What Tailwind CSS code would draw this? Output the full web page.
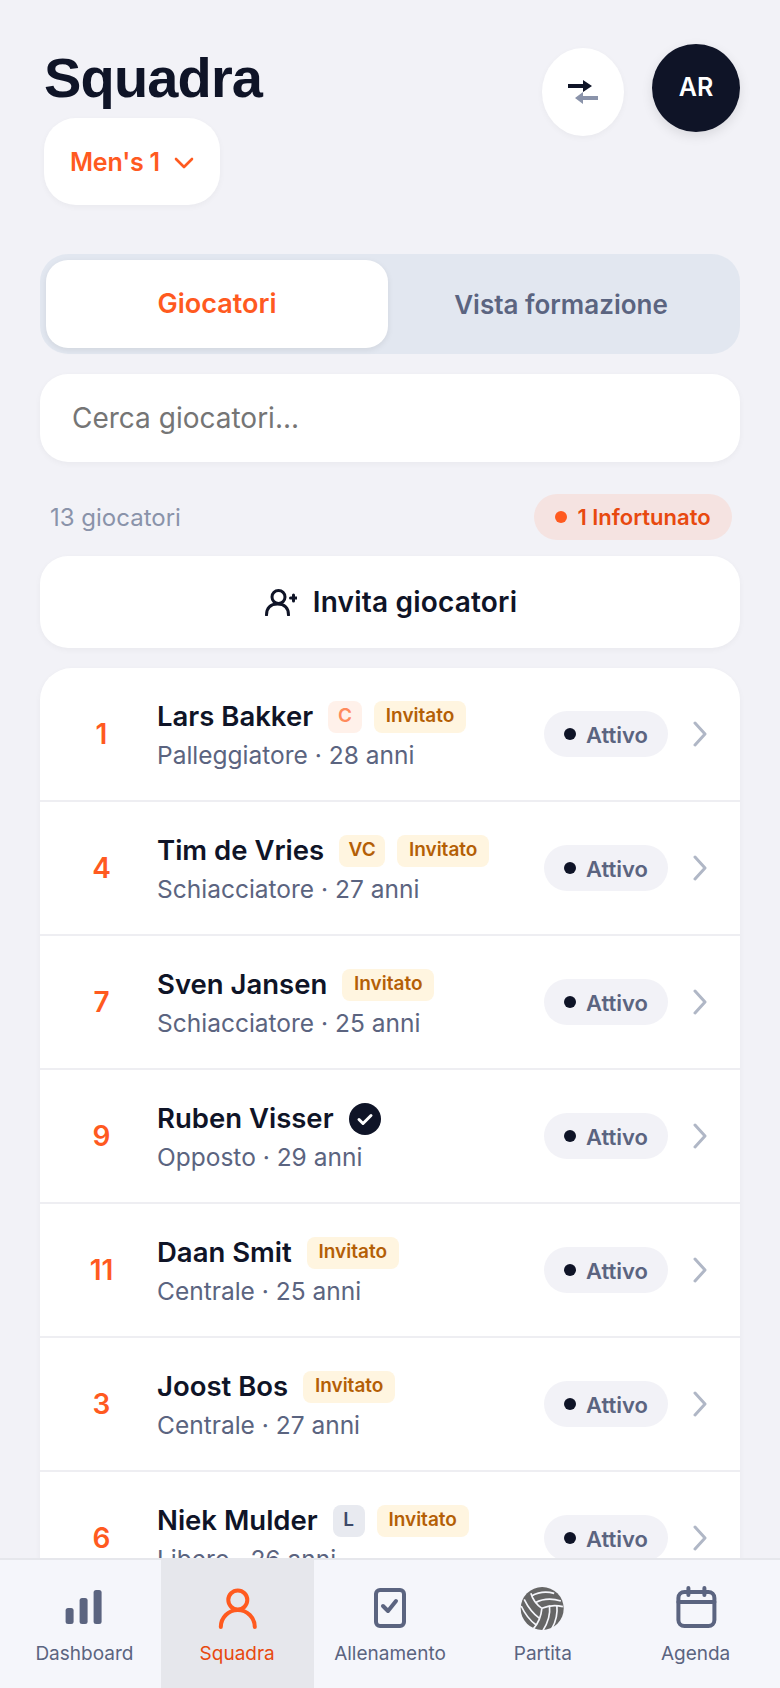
<!DOCTYPE html>
<html lang="en">

<head>
    <meta charset="utf-8">
    <meta name="viewport" content="width=device-width, initial-scale=1">
    <title>Squadra</title>
    <script src="https://cdn.jsdelivr.net/npm/@tailwindcss/browser@4"></script>
</head>

<body class="bg-[#f2f2f7] font-['Inter',sans-serif]">
    <div class="flex flex-col h-[1688px] overflow-hidden">
        <main class="flex-1 min-h-0 overflow-hidden px-10">
            <!-- Header -->
            <header class="flex justify-between items-start pt-11 pl-1">
                <div>
                    <h1 class="font-['Liberation_Sans',sans-serif] font-bold text-[56px] leading-[67px] tracking-[-0.84px] text-[#0f1427]">Squadra</h1>
                    <button class="mt-[7px] w-[176px] h-[87px] pt-[2px] rounded-[32px] bg-white shadow-[0_2px_6px_rgba(0,0,0,0.04)] flex items-center justify-center gap-[14px] text-[#ff5a1f] text-[25px] tracking-[-0.2px] font-semibold">
                        Men's 1
                        <svg class="w-[20px] h-[12px]" viewBox="0 0 20 12" fill="none" stroke="currentColor" stroke-width="2.6" stroke-linecap="round" stroke-linejoin="round"><path d="M2 2l8 8 8-8" /></svg>
                    </button>
                </div>
                <div class="flex items-start gap-7">
                    <button class="mt-1 w-[82px] h-[88px] rounded-[50%] bg-white shadow-[0_2px_6px_rgba(0,0,0,0.04)] flex items-center justify-center">
                        <svg class="w-[30px] h-[24px]" viewBox="0 0 30 24"><path d="M0 4h15V0l9 6-9 6V8H0z" fill="#0f1427" /><path d="M30 16H15v-4l-8 6 8 6v-4h15z" fill="#8a93aa" /></svg>
                    </button>
                    <div class="w-[88px] h-[88px] rounded-full bg-[#0f1427] shadow-[0_4px_12px_rgba(0,0,0,0.1)] text-white text-[25px] font-semibold flex items-center justify-center">AR</div>
                </div>
            </header>

            <!-- Tabs -->
            <div class="mt-[49px] h-[100px] rounded-[28px] bg-[#e2e7f0] p-[6px] flex text-[26px] font-semibold">
                <div class="w-[342px] rounded-[22px] bg-white shadow-[0_2px_6px_rgba(0,0,0,0.08)] text-[27px] text-[#ff5a1f] flex items-center justify-center">Giocatori</div>
                <div class="flex-1 text-[#5b6480] flex items-center justify-center">Vista formazione</div>
            </div>

            <!-- Search -->
            <input type="text" placeholder="Cerca giocatori..." class="mt-5 w-full h-[88px] rounded-[28px] bg-white shadow-[0_2px_6px_rgba(0,0,0,0.04)] px-8 text-[28px] placeholder:text-[#757575] outline-none">

            <!-- Count row -->
            <div class="mt-8 pl-[10px] pr-2 flex items-center justify-between">
                <span class="pt-[2px] text-[24px] text-[#8a93aa]">13 giocatori</span>
                <span class="h-[46px] w-[198px] rounded-full bg-[#f5e3e1] text-[#e8490f] text-[22px] font-semibold flex items-center justify-center gap-[10px]">
                    <span class="w-3 h-3 rounded-full bg-[#ff5a1f]"></span>
                    1 Infortunato
                </span>
            </div>

            <!-- Invite -->
            <button class="mt-[16px] w-full h-[92px] rounded-[28px] bg-white shadow-[0_2px_6px_rgba(0,0,0,0.04)] flex items-center justify-center gap-4 pl-[2px] text-[28px] tracking-[0.2px] font-semibold text-[#0f1427]">
                <svg class="w-8 h-[27px]" viewBox="0 0 32 27" fill="none" stroke="currentColor" stroke-width="3" stroke-linecap="round"><circle cx="13.5" cy="8" r="6.5" /><path d="M1.5 26c0-7 4-11 11-11s11 4 11 11M25.500 9h6M28.500 6v6" /></svg>
                Invita giocatori
            </button>

            <!-- Players -->
            <ul class="mt-5 rounded-t-[32px] bg-white shadow-[0_2px_6px_rgba(0,0,0,0.04)]">
                <li class="h-[134px] border-b-2 border-[#eeeef2] flex items-center">
                    <span class="w-[117px] pl-[6px] text-center text-[#ff5a1f] text-[28px] font-semibold">1</span>
                    <div class="flex-1 min-w-0 pt-[2px]">
                        <div class="flex items-center gap-3 h-[40px]">
                            <span class="text-[27.5px] font-semibold text-[#0f1427] mr-[3px]">Lars Bakker</span>
                            <span class="h-8 w-[34px] rounded-lg bg-[#fff1ea] text-[#ff8a5c] text-[19px] font-semibold flex items-center justify-center">C</span>
                            <span class="h-8 w-[92px] rounded-lg bg-[#fff5e0] text-[#b45f06] text-[19px] font-semibold flex items-center justify-center">Invitato</span>
                        </div>
                        <div class="text-[24.5px] text-[#5b6480]">Palleggiatore · 28 anni</div>
                    </div>
                    <span class="h-[46px] w-[124px] rounded-full bg-[#f2f2f7] text-[#5b6480] text-[22px] font-semibold flex items-center justify-center gap-[10px]"><span class="w-3 h-3 rounded-full bg-[#0f1427]"></span><span class="pt-[2px]">Attivo</span></span>
                    <svg class="mr-8 ml-6 w-[16px] h-[26px]" viewBox="0 0 16 26" fill="none" stroke="#b0b7c6" stroke-width="3" stroke-linecap="round" stroke-linejoin="round"><path d="M3 2l10 11L3 24" /></svg>
                </li>
                <li class="h-[134px] border-b-2 border-[#eeeef2] flex items-center">
                    <span class="w-[117px] pl-[6px] text-center text-[#ff5a1f] text-[28px] font-semibold">4</span>
                    <div class="flex-1 min-w-0 pt-[2px]">
                        <div class="flex items-center gap-3 h-[40px]">
                            <span class="text-[27.5px] font-semibold text-[#0f1427] mr-[3px]">Tim de Vries</span>
                            <span class="h-8 w-[46px] rounded-lg bg-[#fff5e0] text-[#b45f06] text-[19px] font-semibold flex items-center justify-center">VC</span>
                            <span class="h-8 w-[92px] rounded-lg bg-[#fff5e0] text-[#b45f06] text-[19px] font-semibold flex items-center justify-center">Invitato</span>
                        </div>
                        <div class="text-[24.5px] text-[#5b6480]">Schiacciatore · 27 anni</div>
                    </div>
                    <span class="h-[46px] w-[124px] rounded-full bg-[#f2f2f7] text-[#5b6480] text-[22px] font-semibold flex items-center justify-center gap-[10px]"><span class="w-3 h-3 rounded-full bg-[#0f1427]"></span><span class="pt-[2px]">Attivo</span></span>
                    <svg class="mr-8 ml-6 w-[16px] h-[26px]" viewBox="0 0 16 26" fill="none" stroke="#b0b7c6" stroke-width="3" stroke-linecap="round" stroke-linejoin="round"><path d="M3 2l10 11L3 24" /></svg>
                </li>
                <li class="h-[134px] border-b-2 border-[#eeeef2] flex items-center">
                    <span class="w-[117px] pl-[6px] text-center text-[#ff5a1f] text-[28px] font-semibold">7</span>
                    <div class="flex-1 min-w-0 pt-[2px]">
                        <div class="flex items-center gap-3 h-[40px]">
                            <span class="text-[27.5px] font-semibold text-[#0f1427] mr-[3px]">Sven Jansen</span>
                            <span class="h-8 w-[92px] rounded-lg bg-[#fff5e0] text-[#b45f06] text-[19px] font-semibold flex items-center justify-center">Invitato</span>
                        </div>
                        <div class="text-[24.5px] text-[#5b6480]">Schiacciatore · 25 anni</div>
                    </div>
                    <span class="h-[46px] w-[124px] rounded-full bg-[#f2f2f7] text-[#5b6480] text-[22px] font-semibold flex items-center justify-center gap-[10px]"><span class="w-3 h-3 rounded-full bg-[#0f1427]"></span><span class="pt-[2px]">Attivo</span></span>
                    <svg class="mr-8 ml-6 w-[16px] h-[26px]" viewBox="0 0 16 26" fill="none" stroke="#b0b7c6" stroke-width="3" stroke-linecap="round" stroke-linejoin="round"><path d="M3 2l10 11L3 24" /></svg>
                </li>
                <li class="h-[134px] border-b-2 border-[#eeeef2] flex items-center">
                    <span class="w-[117px] pl-[6px] text-center text-[#ff5a1f] text-[28px] font-semibold">9</span>
                    <div class="flex-1 min-w-0 pt-[2px]">
                        <div class="flex items-center gap-3 h-[40px]">
                            <span class="text-[27.5px] font-semibold text-[#0f1427] mr-[3px]">Ruben Visser</span>
                            <svg class="w-8 h-8" viewBox="0 0 32 32"><circle cx="16" cy="16" r="16" fill="#0f1427" /><path d="M10 16.500l4 4 8-8" fill="none" stroke="#fff" stroke-width="3" stroke-linecap="round" stroke-linejoin="round" /></svg>
                        </div>
                        <div class="text-[24.5px] text-[#5b6480]">Opposto · 29 anni</div>
                    </div>
                    <span class="h-[46px] w-[124px] rounded-full bg-[#f2f2f7] text-[#5b6480] text-[22px] font-semibold flex items-center justify-center gap-[10px]"><span class="w-3 h-3 rounded-full bg-[#0f1427]"></span><span class="pt-[2px]">Attivo</span></span>
                    <svg class="mr-8 ml-6 w-[16px] h-[26px]" viewBox="0 0 16 26" fill="none" stroke="#b0b7c6" stroke-width="3" stroke-linecap="round" stroke-linejoin="round"><path d="M3 2l10 11L3 24" /></svg>
                </li>
                <li class="h-[134px] border-b-2 border-[#eeeef2] flex items-center">
                    <span class="w-[117px] pl-[6px] text-center text-[#ff5a1f] text-[28px] font-semibold">11</span>
                    <div class="flex-1 min-w-0 pt-[2px]">
                        <div class="flex items-center gap-3 h-[40px]">
                            <span class="text-[27.5px] font-semibold text-[#0f1427] mr-[3px]">Daan Smit</span>
                            <span class="h-8 w-[92px] rounded-lg bg-[#fff5e0] text-[#b45f06] text-[19px] font-semibold flex items-center justify-center">Invitato</span>
                        </div>
                        <div class="text-[24.5px] text-[#5b6480]">Centrale · 25 anni</div>
                    </div>
                    <span class="h-[46px] w-[124px] rounded-full bg-[#f2f2f7] text-[#5b6480] text-[22px] font-semibold flex items-center justify-center gap-[10px]"><span class="w-3 h-3 rounded-full bg-[#0f1427]"></span><span class="pt-[2px]">Attivo</span></span>
                    <svg class="mr-8 ml-6 w-[16px] h-[26px]" viewBox="0 0 16 26" fill="none" stroke="#b0b7c6" stroke-width="3" stroke-linecap="round" stroke-linejoin="round"><path d="M3 2l10 11L3 24" /></svg>
                </li>
                <li class="h-[134px] border-b-2 border-[#eeeef2] flex items-center">
                    <span class="w-[117px] pl-[6px] text-center text-[#ff5a1f] text-[28px] font-semibold">3</span>
                    <div class="flex-1 min-w-0 pt-[2px]">
                        <div class="flex items-center gap-3 h-[40px]">
                            <span class="text-[27.5px] font-semibold text-[#0f1427] mr-[3px]">Joost Bos</span>
                            <span class="h-8 w-[92px] rounded-lg bg-[#fff5e0] text-[#b45f06] text-[19px] font-semibold flex items-center justify-center">Invitato</span>
                        </div>
                        <div class="text-[24.5px] text-[#5b6480]">Centrale · 27 anni</div>
                    </div>
                    <span class="h-[46px] w-[124px] rounded-full bg-[#f2f2f7] text-[#5b6480] text-[22px] font-semibold flex items-center justify-center gap-[10px]"><span class="w-3 h-3 rounded-full bg-[#0f1427]"></span><span class="pt-[2px]">Attivo</span></span>
                    <svg class="mr-8 ml-6 w-[16px] h-[26px]" viewBox="0 0 16 26" fill="none" stroke="#b0b7c6" stroke-width="3" stroke-linecap="round" stroke-linejoin="round"><path d="M3 2l10 11L3 24" /></svg>
                </li>
                <li class="h-[134px] border-b-2 border-[#eeeef2] flex items-center">
                    <span class="w-[117px] pl-[6px] text-center text-[#ff5a1f] text-[28px] font-semibold">6</span>
                    <div class="flex-1 min-w-0 pt-[2px]">
                        <div class="flex items-center gap-3 h-[40px]">
                            <span class="text-[27.5px] font-semibold text-[#0f1427] mr-[3px]">Niek Mulder</span>
                            <span class="h-8 w-8 rounded-lg bg-[#e8eaf0] text-[#3e4a68] text-[19px] font-semibold flex items-center justify-center">L</span>
                            <span class="h-8 w-[92px] rounded-lg bg-[#fff5e0] text-[#b45f06] text-[19px] font-semibold flex items-center justify-center">Invitato</span>
                        </div>
                        <div class="text-[24.5px] text-[#5b6480]">Libero · 26 anni</div>
                    </div>
                    <span class="h-[46px] w-[124px] rounded-full bg-[#f2f2f7] text-[#5b6480] text-[22px] font-semibold flex items-center justify-center gap-[10px]"><span class="w-3 h-3 rounded-full bg-[#0f1427]"></span><span class="pt-[2px]">Attivo</span></span>
                    <svg class="mr-8 ml-6 w-[16px] h-[26px]" viewBox="0 0 16 26" fill="none" stroke="#b0b7c6" stroke-width="3" stroke-linecap="round" stroke-linejoin="round"><path d="M3 2l10 11L3 24" /></svg>
                </li>
            </ul>
        </main>

        <!-- Bottom nav -->
        <nav class="h-[130px] shrink-0 border-t-2 border-[#e6e7ec] bg-[#f5f6fb] px-2 grid grid-cols-5 text-[19px] leading-[28px] text-[#5b6480]">
            <div class="flex flex-col items-center pt-6">
                <svg class="h-12 w-12" viewBox="0 0 48 48" fill="#5b6480"><rect x="5.600" y="24" width="8" height="16" rx="2.500" /><rect x="19.600" y="14" width="8" height="26" rx="2.500" /><rect x="33.600" y="6" width="8" height="34" rx="2.500" /></svg>
                <span class="mt-2">Dashboard</span>
            </div>
            <div class="flex flex-col items-center pt-6 bg-[#e6e7ec] text-[#e8490f]">
                <svg class="h-12 w-12" viewBox="0 0 48 48" fill="none" stroke="#ff5a1f" stroke-width="4" stroke-linecap="round"><circle cx="24.800" cy="16" r="9.500" /><path d="M7.800 43a17 17 0 0 1 34 0" /></svg>
                <span class="mt-2">Squadra</span>
            </div>
            <div class="flex flex-col items-center pt-6">
                <svg class="h-12 w-12" viewBox="0 0 48 48" fill="none" stroke="#5b6480" stroke-width="4" stroke-linecap="round" stroke-linejoin="round"><rect x="10" y="6" width="28" height="36" rx="4" /><path d="M17 22l5 5 8-10" /></svg>
                <span class="mt-2">Allenamento</span>
            </div>
            <div class="flex flex-col items-center pt-6">
                <svg class="h-12 w-12" viewBox="0 0 48 48"><circle cx="23.200" cy="24.500" r="21.500" fill="#666666" /><g transform="translate(-8.800 -4) scale(0.3333)" fill="none" stroke="#f5f6fb" stroke-width="5"><path d="M62 40Q70 68 95 85" /><path d="M95 85Q125 72 158 80" /><path d="M95 85Q92 120 70 146" /><path d="M75 68Q110 50 152 63" /><path d="M64 48Q95 30 132 40" /><path d="M118 76Q122 115 98 152" /><path d="M140 76Q144 112 125 146" /><path d="M88 115Q60 95 42 58" /><path d="M78 135Q50 115 33 78" /></g></svg>
                <span class="mt-2">Partita</span>
            </div>
            <div class="flex flex-col items-center pt-6">
                <svg class="h-12 w-12" viewBox="0 0 48 48" fill="none" stroke="#5b6480" stroke-width="4" stroke-linecap="round" stroke-linejoin="round"><rect x="6.400" y="8" width="36" height="34" rx="6" /><path d="M6.400 18h36M16.400 4v7M32.400 4v7" /></svg>
                <span class="mt-2">Agenda</span>
            </div>
        </nav>
    </div>
</body>

</html>
